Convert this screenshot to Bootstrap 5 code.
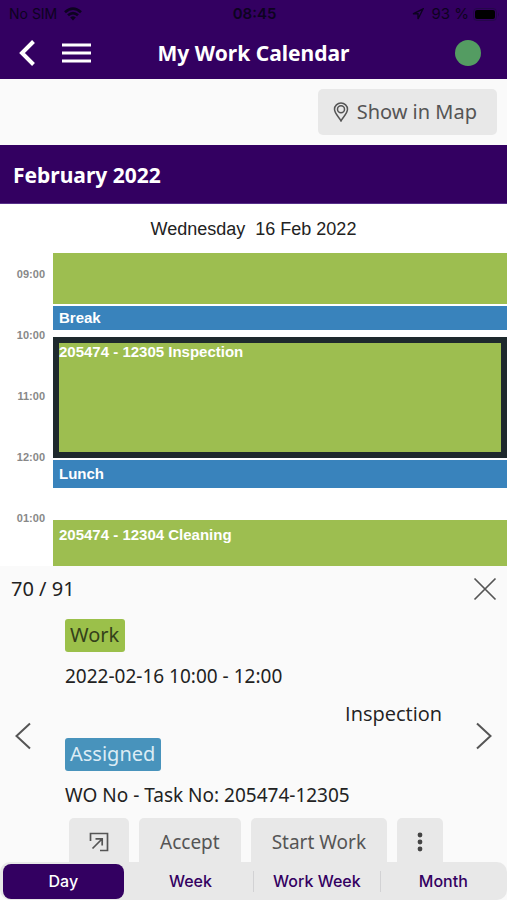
<!DOCTYPE html>
<html lang="en">
<head>
<meta charset="utf-8">
<meta name="viewport" content="width=device-width, initial-scale=1">
<title>My Work Calendar</title>
<link href="https://cdn.jsdelivr.net/npm/bootstrap@5.3.0/dist/css/bootstrap.min.css" rel="stylesheet">
<style>
:root { --brand: #330061; --soft: #e8e8e8; --ink: #222; }
body { font-family: "Noto Sans", sans-serif; font-size: 20px; line-height: 28px; color: var(--ink); background: #fafafa; }
svg { display: block; flex: none; }
.brand-bg { background: var(--brand); color: #fff; }
.status { font: 15px/20px Inter, sans-serif; color: #0d0320; padding: 4px 7px 0 9px; }
.status > * { flex: 1 1 0; }
.carrier { font-size: 14px; gap: 7px; }
.titlebar { height: 55px; padding: 2px 18px 0; }
.titlebar > div { flex: 1 1 0; gap: 24px; }
.titlebar h1, .month { font-size: 21px; line-height: 28px; font-weight: 700; margin: 0; }
.icon-btn { background: none; border: 0; padding: 0; color: inherit; }
.online { width: 26px; height: 26px; border-radius: 50%; background: #549c62; }
.toolbar { padding: 10px; }
.soft-btn { background: var(--soft); color: #555; border: 0; border-radius: 5px; height: 46px; font-size: 19px; line-height: 28px; padding: 0 21px; white-space: nowrap; }
.soft-btn.map-btn { font-size: 20px; padding-left: 15px; padding-right: 20px; gap: 8px; }
.month { padding: 16px 13px 14px; border-bottom: 1px solid #57308a; }
.day { font: 18px/24px "Liberation Sans", sans-serif; padding: 13px 0 12px; }
.calendar { font-family: "Liberation Sans", sans-serif; font-weight: 700; background: #fff; }
.hours { width: 53px; padding: 14px 8px 0 0; font-size: 11px; line-height: 14px; color: #888; text-align: right; }
.hours div { height: 61px; }
.hours div:last-child { height: 14px; }
.event { font-size: 15px; line-height: 18px; color: #fff; padding: 0 6px; display: flex; }
.job { background: #9dbe50; }
.pause { background: #3983bc; align-items: center; }
.early { height: 51px; margin-bottom: 2px; }
.break-slot { height: 24px; margin-bottom: 7px; }
.selected-job { height: 121px; border: 6px solid #1e292d; padding: 0; margin-bottom: 2px; align-items: flex-start; }
.lunch-slot { height: 28px; margin-bottom: 32px; }
.late { min-height: 46px; padding-top: 6px; flex: 1; align-items: flex-start; }
.panel-head { padding: 9px 10px 8px 11px; }
.arrow { width: 46px; padding-top: 42px; color: #555; }
.details { padding: 8px 19px 9px; gap: 10px; }
.details .line { font-size: 19px; }
.task-name { font-family: "Open Sans", sans-serif; }
.tag { border-radius: 3px; padding: 2px 6px 3px 5px; align-self: flex-start; }
.tag-job { background: #9bc04a; color: #34401a; }
.tag-state { background: #4893bc; color: #dcecf5; }
.actions { gap: 10px; padding: 0 64px 0 69px; }
.actions .soft-btn { height: 44px; border-radius: 5px 5px 0 0; padding-top: 3px; }
.actions .glyph-btn { padding-left: 20px; padding-right: 20px; }
.views { background: var(--soft); border-radius: 10px; padding: 2px 1px 1px 3px; }
.views button { flex: 1 1 0; border: 0; background: none; color: var(--brand); font: 500 16px/20px Inter, sans-serif; padding: 7px 0 8px; border-radius: 8px; }
.views button.current { flex: 0 0 24%; margin-right: 4px; background: var(--brand); color: #fff; }
.views .split { width: 1px; margin: 7px 0; background: #d2d2d4; }
</style>
</head>
<body>
<div class="d-flex flex-column min-vh-100">
  <header class="brand-bg">
    <div class="status d-flex">
      <span class="carrier d-flex align-items-center">No SIM
        <svg width="18" height="14" viewBox="0 0 18 14" fill="none" stroke="currentColor" stroke-width="2.7"><path d="M1 5.2Q9-2 17 5.2M4 8.3Q9 3.8 14 8.3"/><path d="M6.2 10.5Q9 8 11.8 10.5L9 13.5Z" fill="currentColor" stroke="none"/></svg>
      </span>
      <span class="fw-semibold text-center">08:45</span>
      <span class="d-flex align-items-center justify-content-end gap-1">
        <svg width="12" height="12" viewBox="0 0 12 12" fill="none" stroke="currentColor" stroke-width="1.4"><path d="M11 1 1 5.8H6V11Z"/></svg>
        <span class="ps-1">93 %</span>
        <svg width="27" height="13" viewBox="0 0 27 13"><rect x=".5" y=".5" width="23" height="12" rx="3.5" fill="none" stroke="#25064a"/><rect x="2" y="2" width="20" height="9" rx="2" fill="#000"/><path d="M25 4.5q2 2 0 4Z" fill="#25064a"/></svg>
      </span>
    </div>
    <div class="titlebar d-flex align-items-center">
      <div class="d-flex align-items-center">
        <button class="icon-btn" aria-label="Back"><svg width="20" height="26" viewBox="0 0 20 26" fill="none" stroke="currentColor" stroke-width="4"><path d="M15.5 1.5 4 13 15.5 24.5"/></svg></button>
        <button class="icon-btn" aria-label="Menu"><svg width="29" height="20" viewBox="0 0 29 20" fill="none" stroke="currentColor" stroke-width="3"><path d="M0 2h29M0 10h29M0 18h29"/></svg></button>
      </div>
      <h1>My Work Calendar</h1>
      <div class="d-flex justify-content-end"><span class="online me-2" role="img" aria-label="Online"></span></div>
    </div>
  </header>

  <div class="toolbar d-flex justify-content-end">
    <button class="soft-btn map-btn d-flex align-items-center"><svg width="16" height="20" viewBox="0 0 16 20" fill="none" stroke="currentColor" stroke-width="1.5"><path d="M8 19C6 15 1.5 11.5 1.5 7.3a6.5 6.3 0 0 1 13 0C14.5 11.5 10 15 8 19Z"/><circle cx="8" cy="7.3" r="3.5"/></svg>Show in Map</button>
  </div>

  <h2 class="month brand-bg">February 2022</h2>
  <div class="day bg-white text-center">Wednesday&nbsp; 16 Feb 2022</div>

  <main class="calendar d-flex flex-grow-1">
    <div class="hours">
      <div>09:00</div><div>10:00</div><div>11:00</div><div>12:00</div><div>01:00</div>
    </div>
    <div class="d-flex flex-column flex-grow-1">
      <div class="event job early"></div>
      <div class="event pause break-slot">Break</div>
      <div class="event job selected-job">205474 - 12305 Inspection</div>
      <div class="event pause lunch-slot">Lunch</div>
      <div class="event job late">205474 - 12304 Cleaning</div>
    </div>
  </main>

  <section>
    <div class="panel-head d-flex justify-content-between align-items-center">
      <span>70 / 91</span>
      <button class="icon-btn" aria-label="Close"><svg width="24" height="24" viewBox="0 0 24 24" fill="none" stroke="#555" stroke-width="1.7"><path d="M1.5 1.5 22.5 22.5M22.5 1.5 1.5 22.5"/></svg></button>
    </div>
    <div class="d-flex">
      <button class="icon-btn arrow d-flex align-items-center justify-content-center" aria-label="Previous"><svg width="18" height="28" viewBox="0 0 18 28" fill="none" stroke="currentColor" stroke-width="2"><path d="M16 1.5 2.5 14 16 26.5"/></svg></button>
      <div class="details d-flex flex-column flex-grow-1">
        <span class="tag tag-job">Work</span>
        <span class="line">2022-02-16 10:00 - 12:00</span>
        <span class="task-name text-end">Inspection</span>
        <span class="tag tag-state">Assigned</span>
        <span class="line">WO No - Task No: 205474-12305</span>
      </div>
      <button class="icon-btn arrow d-flex align-items-center justify-content-center" aria-label="Next"><svg width="18" height="28" viewBox="0 0 18 28" fill="none" stroke="currentColor" stroke-width="2"><path d="M2 1.5 15.5 14 2 26.5"/></svg></button>
    </div>
    <div class="actions d-flex">
      <button class="soft-btn glyph-btn" aria-label="Open"><svg width="20" height="20" viewBox="0 0 20 20" fill="none" stroke="currentColor" stroke-width="1.7"><path d="M1.5 9V1.5H18.5V18.5H11M3.5 16.5 13 7M6.5 6.8H13.2V13.5"/></svg></button>
      <button class="soft-btn">Accept</button>
      <button class="soft-btn">Start Work</button>
      <button class="soft-btn glyph-btn" aria-label="More"><svg width="6" height="20" viewBox="0 0 6 20" fill="#444"><circle cx="3" cy="3" r="2.4"/><circle cx="3" cy="10" r="2.4"/><circle cx="3" cy="17" r="2.4"/></svg></button>
    </div>
  </section>

  <nav class="views d-flex" aria-label="Calendar view">
    <button class="current">Day</button>
    <button>Week</button>
    <span class="split"></span>
    <button>Work Week</button>
    <span class="split"></span>
    <button>Month</button>
  </nav>
</div>
<script src="https://cdn.jsdelivr.net/npm/bootstrap@5.3.0/dist/js/bootstrap.bundle.min.js"></script>
</body>
</html>
